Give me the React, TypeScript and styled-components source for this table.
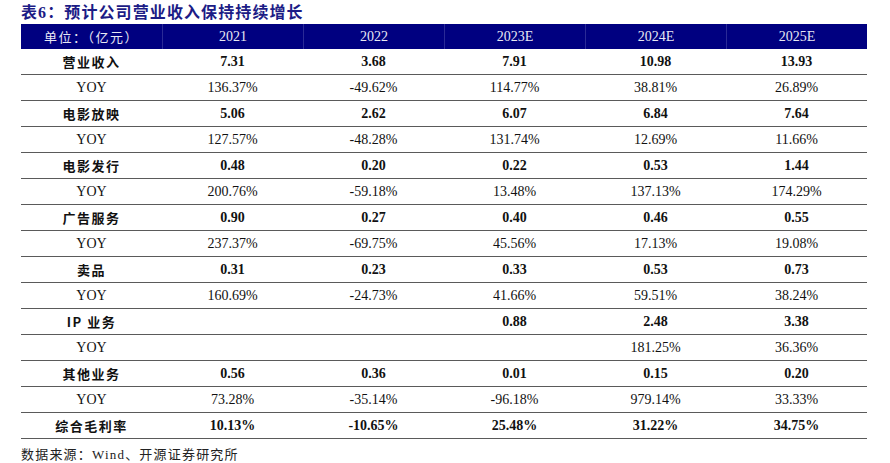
import React from "react";
import styled, { createGlobalStyle } from "styled-components";

const GlobalStyle = createGlobalStyle`
  html, body {
    margin: 0;
    padding: 0;
    background: #ffffff;
  }
  body {
    font-family: "Liberation Serif", "Noto Sans CJK SC", serif;
  }
`;

const Wrapper = styled.main`
  width: 890px;
  height: 463px;
  padding: 3px 23px 0 21px;
  box-sizing: border-box;
`;

const Title = styled.h2`
  margin: 0;
  height: 21px;
  font-size: 16px;
  line-height: 19px;
  font-weight: 700;
  color: #1c1c86;
  font-family: "Liberation Serif", "Noto Sans CJK SC", serif;
  letter-spacing: 1.1px;
`;

const Table = styled.div`
  width: 846px;
  display: grid;
  grid-template-columns: repeat(6, 141px);
`;

const HeadCell = styled.div<{ $first?: boolean }>`
  height: 25px;
  background: #000080;
  color: #e8e8f4;
  display: flex;
  align-items: center;
  justify-content: center;
  font-size: ${(p) => (p.$first ? "13px" : "14px")};
  border-left: ${(p) => (p.$first ? "none" : "1px solid #2a2a96")};
  font-family: ${(p) =>
    p.$first
      ? `"Noto Sans CJK SC", "Liberation Serif", sans-serif`
      : `"Liberation Serif", serif`};
  letter-spacing: ${(p) => (p.$first ? "1.5px" : "0")};
`;

const Cell = styled.div<{ $bold?: boolean; $label?: boolean }>`
  height: 25px;
  border-bottom: 1px solid #5a5a5a;
  display: flex;
  align-items: center;
  justify-content: center;
  font-size: ${(p) => (p.$label && p.$bold ? "13px" : "14px")};
  color: #111;
  font-weight: ${(p) => (p.$bold ? 700 : 400)};
  font-family: ${(p) =>
    p.$label && p.$bold
      ? `"Noto Sans CJK SC", "Liberation Serif", sans-serif`
      : `"Liberation Serif", "Noto Sans CJK SC", serif`};
  letter-spacing: ${(p) => (p.$label && p.$bold ? "1.5px" : "0")};
`;

const Source = styled.p`
  margin: 5px 0 0;
  font-size: 13px;
  color: #222;
  letter-spacing: 1.2px;
  font-family: "Liberation Serif", "Noto Sans CJK SC", serif;
`;

type Row = { label: string; values: string[]; bold: boolean };

const headers = ["单位：（亿元）", "2021", "2022", "2023E", "2024E", "2025E"];

const rows: Row[] = [
  { label: "营业收入", values: ["7.31", "3.68", "7.91", "10.98", "13.93"], bold: true },
  { label: "YOY", values: ["136.37%", "-49.62%", "114.77%", "38.81%", "26.89%"], bold: false },
  { label: "电影放映", values: ["5.06", "2.62", "6.07", "6.84", "7.64"], bold: true },
  { label: "YOY", values: ["127.57%", "-48.28%", "131.74%", "12.69%", "11.66%"], bold: false },
  { label: "电影发行", values: ["0.48", "0.20", "0.22", "0.53", "1.44"], bold: true },
  { label: "YOY", values: ["200.76%", "-59.18%", "13.48%", "137.13%", "174.29%"], bold: false },
  { label: "广告服务", values: ["0.90", "0.27", "0.40", "0.46", "0.55"], bold: true },
  { label: "YOY", values: ["237.37%", "-69.75%", "45.56%", "17.13%", "19.08%"], bold: false },
  { label: "卖品", values: ["0.31", "0.23", "0.33", "0.53", "0.73"], bold: true },
  { label: "YOY", values: ["160.69%", "-24.73%", "41.66%", "59.51%", "38.24%"], bold: false },
  { label: "IP 业务", values: ["", "", "0.88", "2.48", "3.38"], bold: true },
  { label: "YOY", values: ["", "", "", "181.25%", "36.36%"], bold: false },
  { label: "其他业务", values: ["0.56", "0.36", "0.01", "0.15", "0.20"], bold: true },
  { label: "YOY", values: ["73.28%", "-35.14%", "-96.18%", "979.14%", "33.33%"], bold: false },
  { label: "综合毛利率", values: ["10.13%", "-10.65%", "25.48%", "31.22%", "34.75%"], bold: true },
];

export default function App() {
  return (
    <>
      <GlobalStyle />
      <Wrapper>
        <Title>表6：预计公司营业收入保持持续增长</Title>
        <Table>
          {headers.map((h, i) => (
            <HeadCell key={h} $first={i === 0}>
              {h}
            </HeadCell>
          ))}
          {rows.map((r, ri) => (
            <React.Fragment key={ri}>
              <Cell $label $bold={r.bold}>
                {r.label}
              </Cell>
              {r.values.map((v, vi) => (
                <Cell key={vi} $bold={r.bold}>
                  {v}
                </Cell>
              ))}
            </React.Fragment>
          ))}
        </Table>
        <Source>数据来源：Wind、开源证券研究所</Source>
      </Wrapper>
    </>
  );
}
